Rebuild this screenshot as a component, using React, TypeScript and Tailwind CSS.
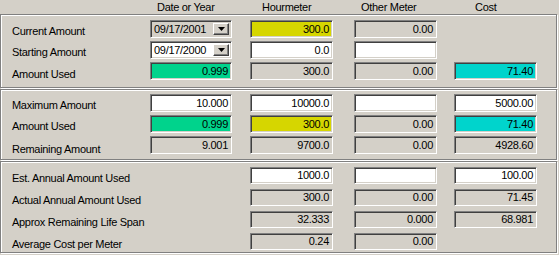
import React from "react"

type Cell = { v: string; bg: string; combo?: boolean } | null

const cols = [
  { w: "w-[82px]", ml: "ml-0" },
  { w: "w-[83px]", ml: "ml-[18px]" },
  { w: "w-[83px]", ml: "ml-[21px]" },
  { w: "w-[83px]", ml: "ml-[17px]" },
]

const GRAY = "bg-[#d4d0c8]"
const WHITE = "bg-white"
const GREEN = "bg-[#00d38c]"
const YELLOW = "bg-[#d6d600]"
const CYAN = "bg-[#00d4cc]"

const sunken =
  "border border-t-[#808080] border-l-[#808080] border-b-white border-r-white shadow-[inset_1px_1px_0_#404040,inset_-1px_-1px_0_#d4d0c8]"

function Field({ cell, w, ml, h }: { cell: Cell; w: string; ml: string; h: string }) {
  if (!cell) return <div className={`${w} ${ml} ${h} shrink-0`} />
  if (cell.combo) {
    return (
      <div className={`${w} ${ml} ${h} shrink-0 flex ${sunken} ${cell.bg} p-[2px]`}>
        <div className="flex-1 pl-[1px] leading-[13px] text-black">{cell.v}</div>
        <div className="w-[16px] h-full flex items-center justify-center bg-[#d4d0c8] border border-t-white border-l-white border-b-[#404040] border-r-[#404040] shadow-[inset_-1px_-1px_0_#808080]">
          <svg width="7" height="4" viewBox="0 0 7 4">
            <polygon points="0,0 7,0 3.5,4" fill="#000" />
          </svg>
        </div>
      </div>
    )
  }
  return (
    <div className={`${w} ${ml} ${h} shrink-0 ${sunken} ${cell.bg} flex items-center justify-end pr-[3px] text-black`}>
      {cell.v}
    </div>
  )
}

function Row({ label, cells, h, lpt = "pt-[4px]" }: { label: string; cells: Cell[]; h: string; lpt?: string }) {
  return (
    <div className="flex">
      <div className={`w-[149px] shrink-0 pl-[11px] ${lpt} flex items-center ${h}`}>{label}</div>
      {cells.map((c, i) => (
        <Field key={i} cell={c} w={cols[i].w} ml={cols[i].ml} h={h} />
      ))}
    </div>
  )
}

function Group({ children, cls }: { children: React.ReactNode; cls: string }) {
  return (
    <div className={`w-[557px] border border-[#808080] shadow-[inset_1px_1px_0_#fff,1px_1px_0_#fff] mb-px ${cls}`}>
      {children}
    </div>
  )
}

export default function App() {
  return (
    <div className="w-[559px] h-[255px] bg-[#d4d0c8] overflow-hidden font-['Liberation_Sans',Arial,sans-serif] text-[11px] tracking-[-0.3px] text-black">
      <div className="flex h-[14px] items-center">
        <div className="w-[150px] shrink-0" />
        <div className="w-[82px] pl-[7px]">Date or Year</div>
        <div className="w-[83px] ml-[18px] pl-[12px]">Hourmeter</div>
        <div className="w-[83px] ml-[21px] pl-[7px]">Other Meter</div>
        <div className="w-[83px] ml-[17px] pl-[21px]">Cost</div>
      </div>

      <Group cls="h-[74px] pt-[5px] flex flex-col gap-[3px]">
        <Row
          h="h-[18px]"
          label="Current Amount"
          cells={[
            { v: "09/17/2001", bg: GRAY, combo: true },
            { v: "300.0", bg: YELLOW },
            { v: "0.00", bg: GRAY },
            null,
          ]}
        />
        <Row
          h="h-[18px]"
          label="Starting Amount"
          cells={[
            { v: "09/17/2000", bg: WHITE, combo: true },
            { v: "0.0", bg: WHITE },
            { v: "", bg: WHITE },
            null,
          ]}
        />
        <Row
          h="h-[18px]"
          label="Amount Used"
          lpt="pt-[6px]"
          cells={[
            { v: "0.999", bg: GREEN },
            { v: "300.0", bg: GRAY },
            { v: "0.00", bg: GRAY },
            { v: "71.40", bg: CYAN },
          ]}
        />
      </Group>

      <Group cls="h-[71px] pt-[4px] flex flex-col gap-[3px]">
        <Row
          h="h-[18px]"
          label="Maximum Amount"
          lpt="pt-[5px]"
          cells={[
            { v: "10.000", bg: WHITE },
            { v: "10000.0", bg: WHITE },
            { v: "", bg: WHITE },
            { v: "5000.00", bg: WHITE },
          ]}
        />
        <Row
          h="h-[18px]"
          label="Amount Used"
          lpt="pt-[5px]"
          cells={[
            { v: "0.999", bg: GREEN },
            { v: "300.0", bg: YELLOW },
            { v: "0.00", bg: GRAY },
            { v: "71.40", bg: CYAN },
          ]}
        />
        <Row
          h="h-[18px]"
          label="Remaining Amount"
          lpt="pt-[8px]"
          cells={[
            { v: "9.001", bg: GRAY },
            { v: "9700.0", bg: GRAY },
            { v: "0.00", bg: GRAY },
            { v: "4928.60", bg: GRAY },
          ]}
        />
      </Group>

      <Group cls="h-[92px] pt-[5px] flex flex-col gap-[5px]">
        <Row
          h="h-[17px]"
          lpt="pt-[6px]"
          label="Est. Annual Amount Used"
          cells={[null, { v: "1000.0", bg: WHITE }, { v: "", bg: WHITE }, { v: "100.00", bg: WHITE }]}
        />
        <Row
          h="h-[17px]"
          lpt="pt-[6px]"
          label="Actual Annual Amount Used"
          cells={[null, { v: "300.0", bg: GRAY }, { v: "0.00", bg: GRAY }, { v: "71.45", bg: GRAY }]}
        />
        <Row
          h="h-[17px]"
          lpt="pt-[6px]"
          label="Approx Remaining Life Span"
          cells={[null, { v: "32.333", bg: GRAY }, { v: "0.000", bg: GRAY }, { v: "68.981", bg: GRAY }]}
        />
        <Row
          h="h-[17px]"
          lpt="pt-[6px]"
          label="Average Cost per Meter"
          cells={[null, { v: "0.24", bg: GRAY }, { v: "0.00", bg: GRAY }, null]}
        />
      </Group>
    </div>
  )
}
